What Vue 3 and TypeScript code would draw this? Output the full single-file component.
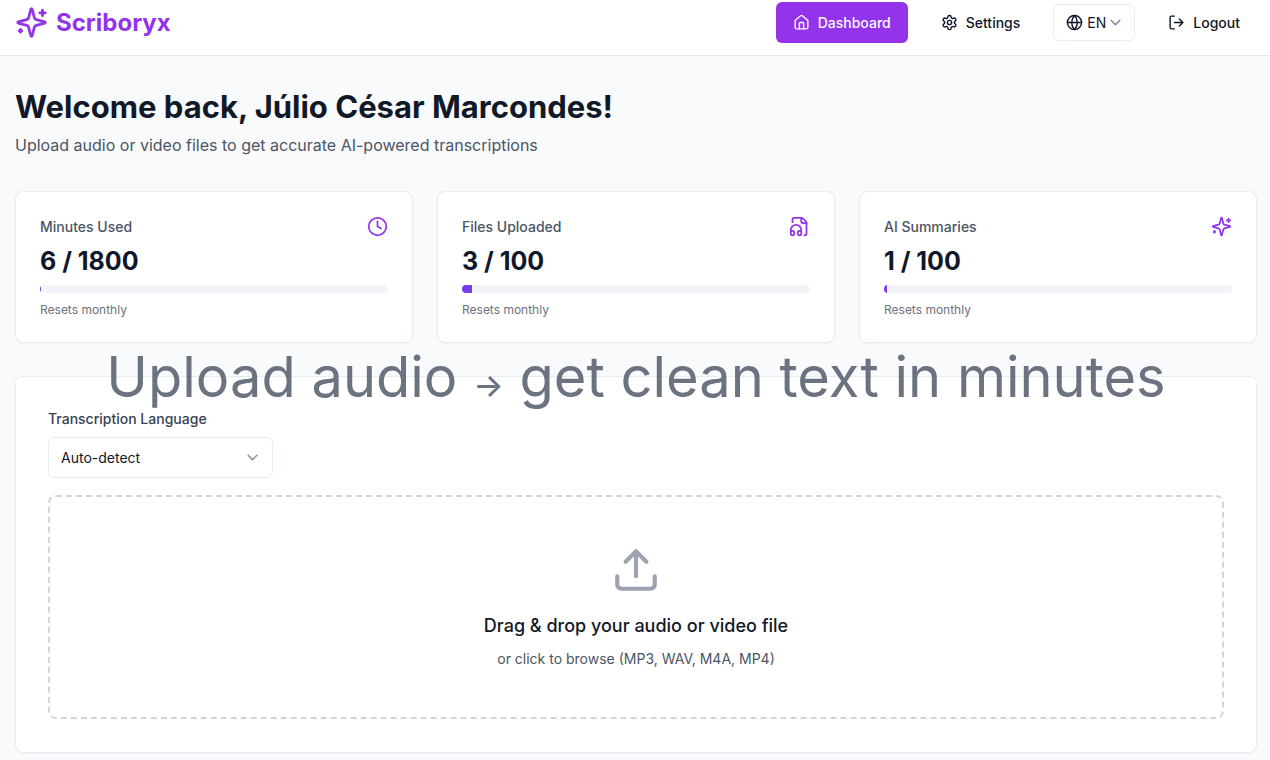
<script setup lang="ts">
import { ref } from 'vue'

interface Stat {
  label: string
  used: number
  limit: number
  icon: 'clock' | 'file' | 'sparkles'
}

const stats: Stat[] = [
  { label: 'Minutes Used', used: 6, limit: 1800, icon: 'clock' },
  { label: 'Files Uploaded', used: 3, limit: 100, icon: 'file' },
  { label: 'AI Summaries', used: 1, limit: 100, icon: 'sparkles' },
]

const locale = ref('EN')
const language = ref('Auto-detect')

const percent = (s: Stat): string => `${(s.used / s.limit) * 100}%`
</script>

<template>
  <div class="page">
    <header class="topbar">
      <a class="brand" href="#">
        <svg class="icon brand-icon" viewBox="0 0 24 24" aria-hidden="true">
          <path d="M9.937 15.5A2 2 0 0 0 8.5 14.063l-6.135-1.582a.5.5 0 0 1 0-.962L8.5 9.936A2 2 0 0 0 9.937 8.5l1.582-6.135a.5.5 0 0 1 .963 0L14.063 8.5A2 2 0 0 0 15.5 9.937l6.135 1.581a.5.5 0 0 1 0 .964L15.5 14.063a2 2 0 0 0-1.437 1.437l-1.582 6.135a.5.5 0 0 1-.963 0z" />
          <path d="M20 3v4M22 5h-4M4 17v2M5 18H3" />
        </svg>
        <span>Scriboryx</span>
      </a>
      <nav class="nav">
        <a class="nav-item active" href="#">
          <svg class="icon small" viewBox="0 0 24 24" aria-hidden="true">
            <path d="M15 21v-8a1 1 0 0 0-1-1h-4a1 1 0 0 0-1 1v8" />
            <path d="M3 10a2 2 0 0 1 .709-1.528l7-5.999a2 2 0 0 1 2.582 0l7 5.999A2 2 0 0 1 21 10v9a2 2 0 0 1-2 2H5a2 2 0 0 1-2-2z" />
          </svg>
          <span>Dashboard</span>
        </a>
        <a class="nav-item" href="#">
          <svg class="icon small" viewBox="0 0 24 24" aria-hidden="true">
            <path d="M12.22 2h-.44a2 2 0 0 0-2 2v.18a2 2 0 0 1-1 1.73l-.43.25a2 2 0 0 1-2 0l-.15-.08a2 2 0 0 0-2.73.73l-.22.38a2 2 0 0 0 .73 2.73l.15.1a2 2 0 0 1 1 1.72v.51a2 2 0 0 1-1 1.74l-.15.09a2 2 0 0 0-.73 2.73l.22.38a2 2 0 0 0 2.73.73l.15-.08a2 2 0 0 1 2 0l.43.25a2 2 0 0 1 1 1.73V20a2 2 0 0 0 2 2h.44a2 2 0 0 0 2-2v-.18a2 2 0 0 1 1-1.73l.43-.25a2 2 0 0 1 2 0l.15.08a2 2 0 0 0 2.73-.73l.22-.39a2 2 0 0 0-.73-2.73l-.15-.08a2 2 0 0 1-1-1.74v-.5a2 2 0 0 1 1-1.74l.15-.09a2 2 0 0 0 .73-2.73l-.22-.38a2 2 0 0 0-2.73-.73l-.15.08a2 2 0 0 1-2 0l-.43-.25a2 2 0 0 1-1-1.73V4a2 2 0 0 0-2-2z" />
            <circle cx="12" cy="12" r="3" />
          </svg>
          <span>Settings</span>
        </a>
        <div class="locale">
          <svg class="icon small" viewBox="0 0 24 24" aria-hidden="true">
            <circle cx="12" cy="12" r="10" />
            <path d="M12 2a14.5 14.5 0 0 0 0 20 14.5 14.5 0 0 0 0-20M2 12h20" />
          </svg>
          <div class="picker">
            <select v-model="locale" aria-label="Interface language">
              <option>EN</option>
            </select>
            <svg class="icon chevron" viewBox="0 0 24 24" aria-hidden="true"><path d="m4 8 8 8 8-8" /></svg>
          </div>
        </div>
        <button class="nav-item" type="button">
          <svg class="icon small" viewBox="0 0 24 24" aria-hidden="true">
            <path d="M9 21H5a2 2 0 0 1-2-2V5a2 2 0 0 1 2-2h4M16 17l5-5-5-5M21 12H9" />
          </svg>
          <span>Logout</span>
        </button>
      </nav>
    </header>

    <main class="content">
      <h1>Welcome back, Júlio César Marcondes!</h1>
      <p class="lead">Upload audio or video files to get accurate AI-powered transcriptions</p>

      <section class="stats">
        <article v-for="s in stats" :key="s.label" class="card stat">
          <div class="stat-head">
            <h2>{{ s.label }}</h2>
            <svg v-if="s.icon === 'clock'" class="icon accent" viewBox="0 0 24 24" aria-hidden="true">
              <circle cx="12" cy="12" r="10" />
              <path d="M12 6v6l4 2" />
            </svg>
            <svg v-else-if="s.icon === 'file'" class="icon accent" viewBox="0 0 24 24" aria-hidden="true">
              <path d="M17.5 22h.5a2 2 0 0 0 2-2V7l-5-5H6a2 2 0 0 0-2 2v3" />
              <path d="M14 2v4a2 2 0 0 0 2 2h4" />
              <path d="M2 19a2 2 0 1 1 4 0v1a2 2 0 1 1-4 0v-4a6 6 0 0 1 12 0v4a2 2 0 1 1-4 0v-1a2 2 0 1 1 4 0" />
            </svg>
            <svg v-else class="icon accent" viewBox="0 0 24 24" aria-hidden="true">
              <path d="M9.937 15.5A2 2 0 0 0 8.5 14.063l-6.135-1.582a.5.5 0 0 1 0-.962L8.5 9.936A2 2 0 0 0 9.937 8.5l1.582-6.135a.5.5 0 0 1 .963 0L14.063 8.5A2 2 0 0 0 15.5 9.937l6.135 1.581a.5.5 0 0 1 0 .964L15.5 14.063a2 2 0 0 0-1.437 1.437l-1.582 6.135a.5.5 0 0 1-.963 0z" />
              <path d="M20 3v4M22 5h-4M4 17v2M5 18H3" />
            </svg>
          </div>
          <p class="value">{{ s.used }} / {{ s.limit }}</p>
          <div class="track" role="progressbar" :aria-label="s.label" :aria-valuenow="s.used" aria-valuemin="0" :aria-valuemax="s.limit">
            <div class="fill" :style="{ width: percent(s) }"></div>
          </div>
          <p class="note">Resets monthly</p>
        </article>
      </section>

      <section class="card upload">
        <p class="tagline">Upload audio <span class="arrow">→</span> get clean text in minutes</p>
        <label class="field-label" for="language">Transcription Language</label>
        <div class="picker language">
          <select id="language" v-model="language">
            <option>Auto-detect</option>
          </select>
          <svg class="icon chevron" viewBox="0 0 24 24" aria-hidden="true"><path d="m4 8 8 8 8-8" /></svg>
        </div>
        <label class="dropzone">
          <input class="file-input" type="file" accept=".mp3,.wav,.m4a,.mp4" />
          <svg class="icon upload-icon" viewBox="0 0 24 24" aria-hidden="true">
            <path d="M21 15v4a2 2 0 0 1-2 2H5a2 2 0 0 1-2-2v-4M17 8l-5-5-5 5M12 3v12" />
          </svg>
          <span class="drop-title">Drag &amp; drop your audio or video file</span>
          <span class="drop-hint">or click to browse (MP3, WAV, M4A, MP4)</span>
        </label>
      </section>
    </main>
  </div>
</template>

<style>
body {
  margin: 0;
  background: #f9fafc;
}
</style>

<style scoped>
.page {
  font-family: Inter, "Liberation Sans", sans-serif;
  font-size: 14px;
  line-height: 20px;
  color: #0f172a;
}
h1, h2, p {
  margin: 0;
}
.icon {
  display: block;
  flex: none;
  width: 21px;
  height: 21px;
  fill: none;
  stroke: currentColor;
  stroke-width: 2;
  stroke-linecap: round;
  stroke-linejoin: round;
}
.icon.small {
  width: 17px;
  height: 17px;
}
.accent {
  color: #9333ea;
}
.topbar {
  display: flex;
  align-items: center;
  justify-content: space-between;
  padding: 2px 13px 12px 15px;
  background: #fff;
  border-bottom: 1px solid #e5e9f0;
}
.brand {
  display: flex;
  align-items: center;
  gap: 8px;
  color: #9333ea;
  font-size: 24px;
  line-height: 32px;
  font-weight: 700;
  text-decoration: none;
}
.brand-icon {
  width: 33px;
  height: 33px;
}
.nav {
  display: flex;
  align-items: center;
  gap: 16px;
}
.nav-item {
  display: flex;
  align-items: center;
  gap: 8px;
  height: 41px;
  padding: 0 17px;
  border: 0;
  border-radius: 6px;
  background: transparent;
  color: #0f172a;
  font: inherit;
  font-weight: 500;
  text-decoration: none;
}
.nav-item.active {
  background: #9333ea;
  color: #f8fafc;
}
.locale {
  display: flex;
  align-items: center;
  gap: 4px;
  box-sizing: border-box;
  height: 37px;
  padding: 0 12px;
  border: 1px solid #e9edf4;
  border-radius: 6px;
  background: #fff;
}
.picker {
  display: grid;
  align-items: center;
}
.picker select {
  grid-area: 1 / 1;
  appearance: none;
  margin: 0;
  padding: 0 16px 0 0;
  border: 0;
  background: transparent;
  color: #0f172a;
  font: inherit;
}
.picker .chevron {
  grid-area: 1 / 1;
  justify-self: end;
  width: 13px;
  height: 13px;
  stroke-width: 2.5;
  color: #808489;
  pointer-events: none;
}
.content {
  padding: 33px 13px 7px 15px;
}
h1 {
  font-size: 31px;
  line-height: 36px;
  font-weight: 700;
  color: #111827;
}
.lead {
  margin-top: 8px;
  font-size: 16px;
  line-height: 25px;
  color: #4b5563;
}
.card {
  box-sizing: border-box;
  border: 1px solid #e7ebf2;
  border-radius: 8px;
  background: #fff;
  box-shadow: 0 1px 2px rgba(15, 23, 42, 0.04);
}
.stats {
  display: grid;
  grid-template-columns: repeat(3, 1fr);
  gap: 24px;
  margin-top: 33px;
}
.stat {
  padding: 24px;
}
.stat-head {
  display: flex;
  align-items: center;
  justify-content: space-between;
}
h2 {
  font-size: 14px;
  line-height: 20px;
  font-weight: 500;
  color: #4b5563;
}
.value {
  margin-top: 8px;
  font-size: 25px;
  line-height: 32px;
  font-weight: 700;
}
.track {
  height: 8px;
  margin-top: 8px;
  border-radius: 4px;
  background: #f1f5f9;
  overflow: hidden;
}
.fill {
  height: 100%;
  background: #7c3aed;
}
.note {
  margin-top: 8px;
  font-size: 12px;
  line-height: 17px;
  color: #6b7280;
}
.upload {
  position: relative;
  display: flex;
  flex-direction: column;
  align-items: flex-start;
  margin-top: 33px;
  padding: 32px 32px 33px;
}
.tagline {
  position: absolute;
  top: 0;
  left: 0;
  right: 0;
  transform: translateY(-50%);
  text-align: center;
  font-size: 56px;
  line-height: 64px;
  font-weight: 400;
  color: #6b7280;
  white-space: nowrap;
  pointer-events: none;
}
.arrow {
  font-size: 32px;
  line-height: 32px;
  font-weight: 500;
}
.field-label {
  font-weight: 500;
  color: #374151;
}
.language {
  width: 225px;
  margin-top: 8px;
}
.language select {
  box-sizing: border-box;
  width: 100%;
  height: 41px;
  padding: 0 36px 0 12px;
  border: 1px solid #e9edf4;
  border-radius: 6px;
  background: #fff;
}
.language .chevron {
  margin-right: 14px;
}
.dropzone {
  box-sizing: border-box;
  display: flex;
  flex-direction: column;
  align-items: center;
  width: 100%;
  margin-top: 17px;
  padding: 48px;
  border: 2px dashed #d1d5db;
  border-radius: 8px;
  cursor: pointer;
}
.file-input {
  position: absolute;
  width: 1px;
  height: 1px;
  opacity: 0;
}
.upload-icon {
  width: 50px;
  height: 50px;
  color: #9ca3af;
}
.drop-title {
  margin-top: 17px;
  font-size: 18px;
  line-height: 28px;
  font-weight: 500;
  color: #111827;
}
.drop-hint {
  margin-top: 8px;
  line-height: 21px;
  color: #4b5563;
}
</style>
